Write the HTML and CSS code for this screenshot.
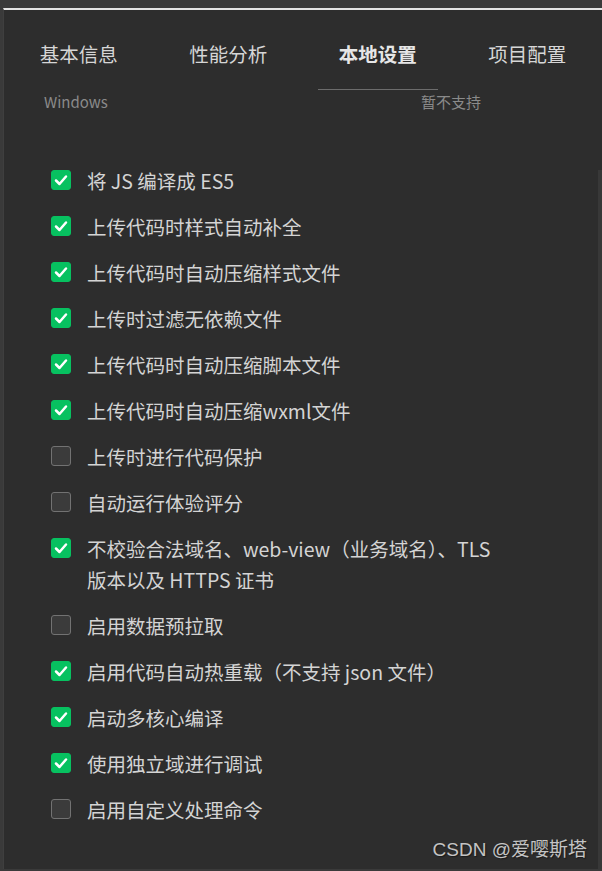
FILE: index.html
```html
<!DOCTYPE html>
<html lang="zh-CN">
<head>
    <meta charset="UTF-8">
    <meta name="viewport" content="width=device-width, initial-scale=1.0">
    <title>本地设置</title>
    <link rel="stylesheet" href="styles.css">
</head>
<body>
    <div class="panel">
        <div class="tabs">
            <div class="tab">基本信息</div>
            <div class="tab">性能分析</div>
            <div class="tab active">本地设置</div>
            <div class="tab">项目配置</div>
        </div>
        <div class="sub-row">
            <span class="sub-left">Windows</span>
            <span>暂不支持</span>
        </div>
        <ul class="options" id="options"></ul>
        <div class="scrollbar"></div>
        <div class="watermark">CSDN @爱嘤斯塔</div>
    </div>

    <script>
        const options = [
            { label: "将 JS 编译成 ES5", checked: true },
            { label: "上传代码时样式自动补全", checked: true },
            { label: "上传代码时自动压缩样式文件", checked: true },
            { label: "上传时过滤无依赖文件", checked: true },
            { label: "上传代码时自动压缩脚本文件", checked: true },
            { label: "上传代码时自动压缩wxml文件", checked: true },
            { label: "上传时进行代码保护", checked: false },
            { label: "自动运行体验评分", checked: false },
            { label: "不校验合法域名、web-view（业务域名）、TLS 版本以及 HTTPS 证书", checked: true },
            { label: "启用数据预拉取", checked: false },
            { label: "启用代码自动热重载（不支持 json 文件）", checked: true },
            { label: "启动多核心编译", checked: true },
            { label: "使用独立域进行调试", checked: true },
            { label: "启用自定义处理命令", checked: false }
        ];

        const checkMark = '<svg viewBox="0 0 20 20" width="20" height="20"><polyline points="5,10.5 8.5,14 15,6.5" fill="none" stroke="#fff" stroke-width="2.5" stroke-linecap="round" stroke-linejoin="round"/></svg>';

        const list = document.getElementById('options');
        options.forEach(({ label, checked }) => {
            const item = document.createElement('li');
            item.className = 'option';
            item.innerHTML = `
                <span class="box ${checked ? 'checked' : ''}">${checked ? checkMark : ''}</span>
                <span class="label">${label}</span>
            `;
            list.appendChild(item);
        });
    </script>
</body>
</html>
```

FILE: styles.css
```css
body {
    margin: 0;
    padding: 8px 0 0 0;
    background-color: #3a3a3a;
    font-family: "Noto Sans CJK SC", "Noto Sans", sans-serif;
    overflow: hidden;
}
.panel {
    position: relative;
    margin-left: 3px;
    height: 861px;
    background: #2d2d2d;
    border-top: 2px solid #e4e4e4;
    border-left: 1px solid #3f3f3f;
    box-sizing: border-box;
}
.tabs {
    display: flex;
    padding-top: 29px;
}
.tab {
    position: relative;
    flex: 1;
    text-align: center;
    font-size: 19.5px;
    line-height: 30px;
    height: 30px;
    padding-bottom: 21px;
    color: #d6d6d6;
}
.tab.active {
    font-weight: bold;
    color: #e6e6e6;
}
.tab.active::after {
    content: "";
    position: absolute;
    left: 15px;
    right: 15px;
    bottom: 0;
    height: 1px;
    background: #6c6c6c;
}
.sub-row {
    display: flex;
    font-size: 15px;
    line-height: 24px;
    color: #8a8a8a;
}
.sub-left {
    width: 417px;
    padding-left: 40px;
    box-sizing: border-box;
}
.options {
    list-style: none;
    margin: 0;
    padding: 51px 0 0 47px;
}
.option {
    display: flex;
    align-items: flex-start;
    margin-bottom: 15px;
    font-size: 19.5px;
    line-height: 31px;
    color: #d4d4d4;
}
.box {
    flex: 0 0 auto;
    width: 20px;
    height: 20px;
    margin-top: 5px;
    margin-right: 16px;
    border: 1px solid #727272;
    border-radius: 3px;
    background: #3b3b3b;
    box-sizing: border-box;
}
.box.checked {
    border-color: #07c160;
    background: #07c160;
}
.box svg {
    display: block;
    margin: -1px;
}
.label {
    max-width: 420px;
}
.scrollbar {
    position: absolute;
    right: 0;
    top: 160px;
    bottom: 0;
    width: 4px;
    background: #383838;
}
.watermark {
    position: absolute;
    right: 15px;
    bottom: 8px;
    font-family: "Liberation Sans", "Noto Sans CJK SC", sans-serif;
    font-size: 19px;
    color: #c4c4c4;
    text-shadow: 1px 1px 1px #1a1a1a;
}
```
